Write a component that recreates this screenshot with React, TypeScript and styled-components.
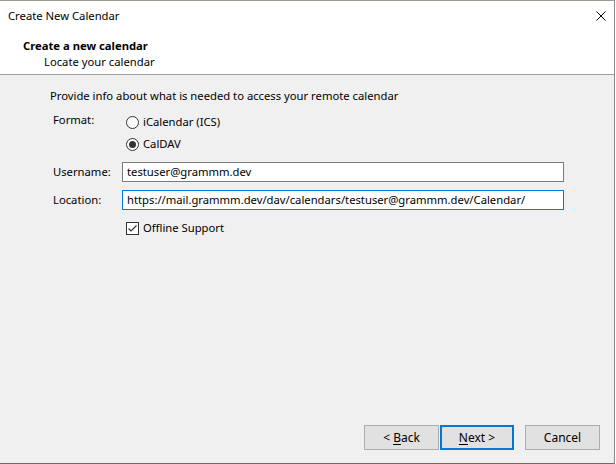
import React from "react";
import styled, { createGlobalStyle } from "styled-components";

const Global = createGlobalStyle`
  html, body { margin: 0; padding: 0; background: #ffffff; }
  body { font-family: "Segoe UI", "Noto Sans", "Open Sans", sans-serif; font-size: 11.25px; color: #000; }
  * { box-sizing: border-box; }
`;

const Window = styled.div`
  width: 615px;
  height: 464px;
  display: flex;
  flex-direction: column;
  border-top: 1px solid #9a9b8c;
  border-right: 1px solid #8a8a8a;
  border-bottom: 1px solid #6b6c60;
  background: #f0f0f0;
`;

const Top = styled.div`
  background: #ffffff;
  border-bottom: 1px solid #a0a0a0;
  padding: 7px 8px 4px 8px;
  display: flex;
  flex-direction: column;
`;

const TitleRow = styled.div`
  display: flex;
  align-items: center;
  justify-content: space-between;
  height: 16px;
  line-height: 16px;
`;

const Heading = styled.div<{ $indent: number; $bold?: boolean }>`
  height: 16px;
  line-height: 16px;
  padding-left: ${(p) => p.$indent}px;
  font-weight: ${(p) => (p.$bold ? 700 : 400)};
`;

const HeadingGap = styled.div`
  height: 14px;
`;

const Body = styled.div`
  flex: 1;
  display: flex;
  flex-direction: column;
  padding: 13px 14px 13px 50px;
`;

const Intro = styled.div`
  height: 16px;
  line-height: 16px;
`;

const Form = styled.div`
  display: grid;
  grid-template-columns: 69px 442px;
  margin: 8px 0 0 3px;
  align-items: center;
`;

const Label = styled.div<{ $top?: boolean }>`
  height: 16px;
  line-height: 16px;
  align-self: ${(p) => (p.$top ? "start" : "center")};
`;

const Options = styled.div`
  display: flex;
  flex-direction: column;
  gap: 6px;
  padding: 2px 0 0 4px;
`;

const Option = styled.label`
  display: flex;
  align-items: center;
  gap: 4px;
  height: 16px;
  line-height: 16px;
`;

const Radio = styled.span<{ $checked?: boolean }>`
  width: 13px;
  height: 13px;
  border-radius: 50%;
  border: 1px solid #333333;
  background: #ffffff;
  display: flex;
  align-items: center;
  justify-content: center;
  &::after {
    content: "";
    width: 7px;
    height: 7px;
    border-radius: 50%;
    background: ${(p) => (p.$checked ? "#333333" : "transparent")};
  }
`;

const Check = styled.span`
  width: 13px;
  height: 13px;
  border: 1px solid #333333;
  background: #ffffff;
  display: flex;
  align-items: center;
  justify-content: center;
`;

const Input = styled.div<{ $focused?: boolean }>`
  height: 20px;
  width: 442px;
  border: 1px solid ${(p) => (p.$focused ? "#0078d7" : "#7a7a7a")};
  background: #ffffff;
  padding: 0 4px;
  line-height: 18px;
  white-space: nowrap;
  overflow: hidden;
`;

const Spacer = styled.div<{ $h: number }>`
  grid-column: 1 / span 2;
  height: ${(p) => p.$h}px;
`;

const CheckCell = styled.div`
  grid-column: 2;
  padding-left: 4px;
`;

const Fill = styled.div`
  flex: 1;
`;

const Buttons = styled.div`
  display: flex;
  justify-content: flex-end;
`;

const Button = styled.div<{ $primary?: boolean; $w: number; $ml: number }>`
  width: ${(p) => p.$w}px;
  height: 25px;
  margin-left: ${(p) => p.$ml}px;
  background: #e1e1e1;
  border: ${(p) => (p.$primary ? "2px solid #0078d7" : "1px solid #adadad")};
  display: flex;
  align-items: center;
  justify-content: center;
  font-size: 12px;
  u { text-decoration: underline; text-underline-offset: 2px; }
`;

export default function App() {
  return (
    <>
      <Global />
      <Window>
        <Top>
          <TitleRow>
            <span>Create New Calendar</span>
            <svg width="10" height="10" viewBox="0 0 10 10">
              <path d="M0.5 0.5 L9.5 9.5 M9.5 0.5 L0.5 9.5" stroke="#000" strokeWidth="1" />
            </svg>
          </TitleRow>
          <HeadingGap />
          <Heading $indent={15} $bold>
            Create a new calendar
          </Heading>
          <Heading $indent={36}>Locate your calendar</Heading>
        </Top>
        <Body>
          <Intro>Provide info about what is needed to access your remote calendar</Intro>
          <Form>
            <Label $top>Format:</Label>
            <Options>
              <Option>
                <Radio />
                iCalendar (ICS)
              </Option>
              <Option>
                <Radio $checked />
                CalDAV
              </Option>
            </Options>
            <Spacer $h={10} />
            <Label>Username:</Label>
            <Input>testuser@grammm.dev</Input>
            <Spacer $h={8} />
            <Label>Location:</Label>
            <Input $focused>https://mail.grammm.dev/dav/calendars/testuser@grammm.dev/Calendar/</Input>
            <Spacer $h={10} />
            <CheckCell>
              <Option>
                <Check>
                  <svg width="11" height="11" viewBox="0 0 11 11">
                    <path d="M1.5 5.5 L4 8 L9.5 2.5" stroke="#333" strokeWidth="1.2" fill="none" />
                  </svg>
                </Check>
                Offline Support
              </Option>
            </CheckCell>
          </Form>
          <Fill />
          <Buttons>
            <Button $w={75} $ml={0}>
              &lt;&nbsp;<u>B</u>ack
            </Button>
            <Button $w={74} $ml={1} $primary>
              <u>N</u>ext &gt;
            </Button>
            <Button $w={75} $ml={11}>
              Cancel
            </Button>
          </Buttons>
        </Body>
      </Window>
    </>
  );
}
